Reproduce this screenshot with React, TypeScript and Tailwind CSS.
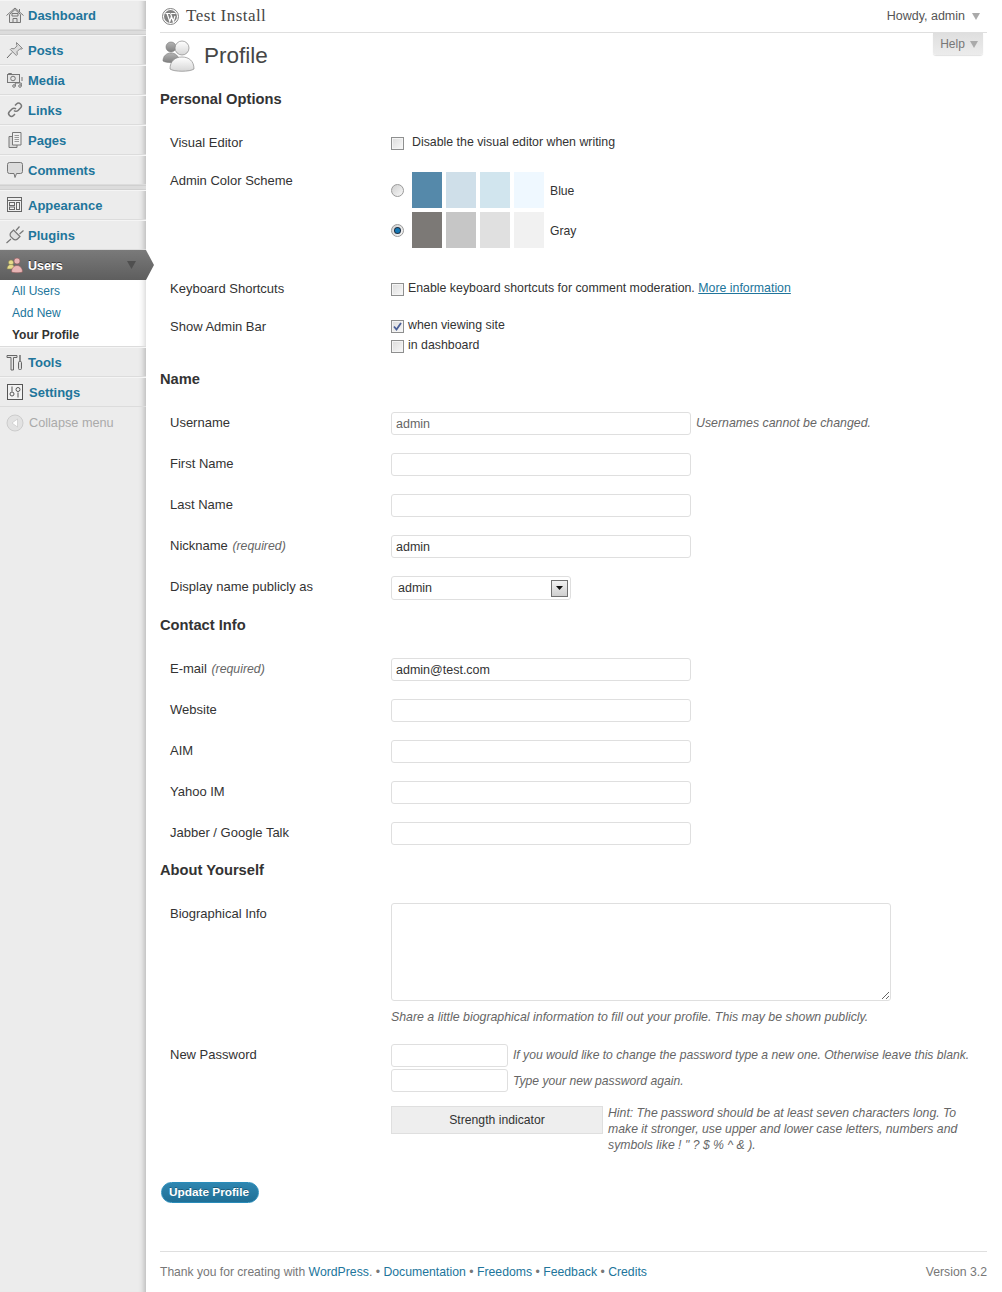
import React from 'react';

const arial = 'font-["Liberation_Sans",Arial,sans-serif]';

const HomeIcon = () => (
  <svg width="18" height="18" viewBox="0 0 18 18" fill="none" stroke="#777" strokeWidth="1">
    <path d="M.5 9.500 9 2l8.500 7.500" />
    <path d="M13.500 3v3" />
    <path d="M3.500 8.500v8h11v-8L9 3.500z" fill="#e4e4e4" />
    <path d="M7 16.500v-4h4v4M6 7.500h6v2.500H6z" />
  </svg>
);
const PinIcon = () => (
  <svg width="18" height="18" viewBox="0 0 18 18" fill="none" stroke="#888" strokeWidth="1">
    <path d="M10.500 1.500l6 6-1.500.7-1-.5-3 3 .3 2.800-1 1-6-6 1-1 2.800.3 3-3-.6-1z" fill="#dcdcdc" />
    <path d="M6 11.500l-5 5.500" stroke="#666" />
  </svg>
);
const MediaIcon = () => (
  <svg width="18" height="18" viewBox="0 0 18 18" fill="none" stroke="#777" strokeWidth="1">
    <rect x="1.500" y="3.500" width="12" height="8" fill="#e6e6e6" />
    <circle cx="7" cy="7.500" r="2.300" />
    <path d="M2.500 3.500v-1h3v1M15 7h2M15 9h2" />
    <circle cx="8" cy="15" r="1.300" />
    <circle cx="14" cy="15" r="1.300" />
    <path d="M9.300 15v-3h6v3" />
  </svg>
);
const LinkIcon = () => (
  <svg width="18" height="18" viewBox="0 0 18 18" fill="none" stroke="#777" strokeWidth="1.500">
    <path d="M9 4.500l1.500-1.500a2.800 2.800 0 0 1 4 4L12 9.500a2.800 2.800 0 0 1-4 0" />
    <path d="M9 13l-1.500 1.500a2.800 2.800 0 0 1-4-4L6 8a2.800 2.800 0 0 1 4 0" />
  </svg>
);
const PagesIcon = () => (
  <svg width="18" height="18" viewBox="0 0 18 18" fill="none" stroke="#777" strokeWidth="1">
    <path d="M3 5.500h8v11H3z" fill="#d8d8d8" />
    <path d="M6.500 1.500h8.500v12.500H6.500z" fill="#efefef" />
    <path d="M8.500 4.500h4.500M8.500 6.500h4.500M8.500 8.500h4.500M8.500 10.500h4.500" stroke="#999" />
  </svg>
);
const CommentIcon = () => (
  <svg width="18" height="18" viewBox="0 0 18 18" fill="none" stroke="#777" strokeWidth="1">
    <path d="M3.500 1.500h11a2 2 0 0 1 2 2v7a2 2 0 0 1-2 2h-4L9 16.500l-1-4H3.500a2 2 0 0 1-2-2v-7a2 2 0 0 1 2-2z" fill="#dcdcdc" />
  </svg>
);
const AppearanceIcon = () => (
  <svg width="18" height="18" viewBox="0 0 18 18" fill="none" stroke="#666" strokeWidth="1">
    <rect x="1.500" y="1.500" width="14" height="14" fill="#eee" />
    <path d="M1.500 4.500h14" />
    <rect x="3.500" y="6.500" width="5" height="3" />
    <rect x="3.500" y="11" width="5" height="2.500" />
    <rect x="10.500" y="6.500" width="3" height="7" />
  </svg>
);
const PluginIcon = () => (
  <svg width="18" height="18" viewBox="0 0 18 18" fill="none" stroke="#777" strokeWidth="1.200">
    <path d="M7.500 4l6.500 6.500-2.500 2.500a3 3 0 0 1-4.300 0L5 10.800a3 3 0 0 1 0-4.300z" fill="#e0e0e0" />
    <path d="M10 4.500l3.500-4M13.500 8l4-3.500M5 13l-4.500 4" />
  </svg>
);
const UsersIcon = () => (
  <svg width="18" height="18" viewBox="0 0 18 18">
    <circle cx="5" cy="6.500" r="2.500" fill="#e6dc8c" stroke="#8a8450" strokeWidth=".6" />
    <path d="M1 13c0-3 2-4.500 4-4.500S9 10 9 13z" fill="#e6dc8c" stroke="#8a8450" strokeWidth=".6" />
    <circle cx="11" cy="5" r="3" fill="#e8b4b4" stroke="#8e5a5a" strokeWidth=".6" />
    <path d="M5.500 16c0-4 2.500-6.500 5.500-6.500s5.500 2.500 5.500 6.500c-2 1-9 1-11 0z" fill="#e8b4b4" stroke="#8e5a5a" strokeWidth=".6" />
  </svg>
);
const ToolsIcon = () => (
  <svg width="18" height="18" viewBox="0 0 18 18" fill="none" stroke="#666" strokeWidth="1">
    <path d="M1 2.500h10v2H7.500V17h-2.500V4.500H1z" fill="#e4e4e4" />
    <rect x="12.500" y="8.500" width="3" height="8" rx="1" fill="#ddd" />
    <path d="M14 8.500V2" strokeWidth="1.400" />
  </svg>
);
const SettingsIcon = () => (
  <svg className="mr-[1px]" width="18" height="18" viewBox="0 0 18 18" fill="none" stroke="#555" strokeWidth="1">
    <rect x="1.500" y="1.500" width="15" height="15" fill="#f2f2f2" />
    <path d="M6 3.500v5M12 9.500v5" />
    <circle cx="6" cy="11" r="2" />
    <circle cx="12" cy="6.500" r="2" />
  </svg>
);

const MenuItem = ({ icon, label, h = 30 }: { icon: React.ReactNode; label: string; h?: number }) => (
  <div
    style={{ height: h }}
    className="flex items-center gap-[3px] border-t border-t-[#f5f5f5] border-b border-b-[#dcdcdc] pl-[6px] text-[13px] font-bold text-[#21759b] leading-none"
  >
    {icon}
    <span className="pl-[1px]">{label}</span>
  </div>
);

const Separator = () => <div className="h-[5px] bg-[#dcdcdc] border-t border-b border-[#d0d0d0]" />;

const Sidebar = () => (
  <aside className="relative w-[146px] shrink-0 bg-[#ececec] shadow-[inset_-7px_0_6px_-6px_rgba(0,0,0,0.28)]">
    <MenuItem icon={<HomeIcon />} label="Dashboard" />
    <Separator />
    <MenuItem icon={<PinIcon />} label="Posts" />
    <MenuItem icon={<MediaIcon />} label="Media" />
    <MenuItem icon={<LinkIcon />} label="Links" />
    <MenuItem icon={<PagesIcon />} label="Pages" />
    <MenuItem icon={<CommentIcon />} label="Comments" />
    <Separator />
    <MenuItem icon={<AppearanceIcon />} label="Appearance" />
    <MenuItem icon={<PluginIcon />} label="Plugins" />
    <div className="relative flex h-[30px] w-[146px] items-center gap-[3px] bg-gradient-to-b from-[#7a7a7a] to-[#5e5e5e] pl-[6px] text-[12.500px] font-bold text-white [text-shadow:0_-1px_0_#333]">
      <UsersIcon />
      <span className="pl-[1px] pt-[3px]">Users</span>
      <svg className="absolute left-[127px] top-[11px]" width="9" height="8" viewBox="0 0 9 8">
        <path d="M0 0h9L4.500 8z" fill="#4f4f4f" />
      </svg>
      <svg className="absolute left-[146px] top-0" width="8" height="30" viewBox="0 0 8 30">
        <defs>
          <linearGradient id="users-tip" x1="0" y1="0" x2="0" y2="1">
            <stop offset="0" stopColor="#7a7a7a" />
            <stop offset="1" stopColor="#5e5e5e" />
          </linearGradient>
        </defs>
        <path d="M0 0l8 15L0 30z" fill="url(#users-tip)" />
      </svg>
    </div>
    <div className="h-[67px] bg-white border-b border-b-[#dcdcdc] pl-[12px] pt-[1px] text-[12px] shadow-[inset_-7px_0_6px_-6px_rgba(0,0,0,0.2)]">
      <div className="h-[22px] leading-[20px] text-[#21759b]">All Users</div>
      <div className="h-[22px] leading-[20px] text-[#21759b]">Add New</div>
      <div className="h-[22px] leading-[20px] font-bold text-[#333]">Your Profile</div>
    </div>
    <MenuItem icon={<ToolsIcon />} label="Tools" />
    <MenuItem icon={<SettingsIcon />} label="Settings" />
    <div className="flex h-[32px] items-center gap-[5px] pl-[6px] text-[12.700px] text-[#aaa]">
      <svg width="18" height="18" viewBox="0 0 18 18">
        <circle cx="9" cy="9" r="8" fill="#e2e2e2" stroke="#ccc" />
        <path d="M11.500 5v8L6 9z" fill="#fff" stroke="#bbb" strokeWidth=".5" />
      </svg>
      <span className="pt-[1px]">Collapse menu</span>
    </div>
  </aside>
);

const Checkbox = ({ checked = false }: { checked?: boolean }) => (
  <span className="relative block h-[13px] w-[13px] shrink-0 border border-[#8e8f8f] bg-gradient-to-br from-[#dcdcdc] to-[#f8f8f8] shadow-[inset_0_0_0_1px_#f4f4f4]">
    {checked && (
      <svg className="absolute left-[1px] top-[1px]" width="9" height="9" viewBox="0 0 9 9">
        <path d="M1 4.500l2.500 3L8 1" fill="none" stroke="#4a5f97" strokeWidth="1.800" />
      </svg>
    )}
  </span>
);

const Radio = ({ checked = false }: { checked?: boolean }) => (
  <span className="flex h-[13px] w-[13px] shrink-0 items-center justify-center rounded-full border border-[#9a9a9a] bg-gradient-to-br from-[#d0d0d0] to-[#f8f8f8]">
    {checked && <span className="block h-[5px] w-[5px] rounded-full bg-[#1679b5] ring-1 ring-[#1d2f44]" />}
  </span>
);

const TextInput = ({ value = '', muted = false, w = 300 }: { value?: string; muted?: boolean; w?: number }) => (
  <input
    readOnly
    value={value}
    style={{ width: w }}
    className={`h-[23px] rounded-[3px] border border-[#dfdfdf] bg-white px-[4px] text-[12.500px] ${arial} ${muted ? 'text-[#666]' : 'text-[#333]'}`}
  />
);

const Heading = ({ children }: { children: React.ReactNode }) => (
  <h3 className="h-[44px] text-[14.700px] font-bold leading-[22px] text-[#333]">{children}</h3>
);

const Row = ({ label, h = 41, low = false, children }: { label: React.ReactNode; h?: number; low?: boolean; children?: React.ReactNode }) => (
  <div style={{ height: h }} className="flex text-[#333]">
    <div className={`w-[231px] shrink-0 pl-[10px] text-[13px] leading-[22px] ${low ? 'pt-[1px]' : ''}`}>{label}</div>
    <div className="min-w-0 flex-1 text-[12.350px]">{children}</div>
  </div>
);

const Required = () => <em className="pl-[1px] text-[12.300px] text-[#666]">(required)</em>;

const Hint = ({ className = '', children }: { className?: string; children: React.ReactNode }) => (
  <span className={`italic text-[#666] ${className}`}>{children}</span>
);

const Swatches = ({ colors, name, checked = false }: { colors: string[]; name: string; checked?: boolean }) => (
  <div className="flex h-[36px] items-center">
    <span className="w-[21px]">
      <Radio checked={checked} />
    </span>
    <div className="flex gap-[4px]">
      {colors.map((c) => (
        <span key={c} style={{ backgroundColor: c }} className="block h-[36px] w-[30px]" />
      ))}
    </div>
    <span className="pl-[6px] pt-[2px] text-[12.200px]">{name}</span>
  </div>
);

const FooterLink = ({ children }: { children: React.ReactNode }) => <span className="text-[#21759b]">{children}</span>;

export default function App() {
  return (
    <div className={`flex min-h-[1292px] bg-white ${arial}`}>
      <Sidebar />
      <main className="relative min-w-0 flex-1 pl-[14px] pr-[15px]">
        <header className="flex h-[33px] items-center justify-between border-b border-[#dfdfdf]">
          <div className="flex items-center pl-[2px]">
            <svg width="17" height="17" viewBox="0 0 17 17" fill="none">
              <circle cx="8.500" cy="8.500" r="8" fill="#fff" stroke="#808080" />
              <circle cx="8.500" cy="8.500" r="6.500" fill="#808080" />
              <path d="M3.500 5.500h4.500M9 5.500h4.500M5 5.500l2.800 8 1.700-5M8.500 5.500l2.800 8 1.700-5.500" stroke="#fff" strokeWidth="1.200" />
            </svg>
            <span className='pl-[7px] font-["Liberation_Serif",Georgia,serif] text-[17px] tracking-[0.45px] text-[#464646]'>Test Install</span>
          </div>
          <div className="flex items-center gap-[7px] pr-[7px] text-[12.500px] text-[#555]">
            <span>Howdy, admin</span>
            <svg width="8" height="8" viewBox="0 0 8 8">
              <path d="M0 1h8L4 8z" fill="#aaa" />
            </svg>
          </div>
        </header>

        <div className="absolute right-[19px] top-[33px] flex h-[22px] w-[50px] items-center justify-center gap-[5px] rounded-b-[3px] bg-gradient-to-b from-[#dfdfdf] to-[#ececec] pl-[2px] text-[12px] text-[#777] shadow-[0_1px_1px_rgba(0,0,0,0.12)]">
          <span>Help</span>
          <svg width="8" height="8" viewBox="0 0 8 8">
            <path d="M0 1h8L4 8z" fill="#aaa" />
          </svg>
        </div>

        <div className="flex h-[46px] items-center pl-[2px]">
          <svg width="34" height="34" viewBox="0 0 34 34">
            <defs>
              <linearGradient id="person-back" x1="0" y1="0" x2="0" y2="1">
                <stop offset="0" stopColor="#b5b5b5" />
                <stop offset="1" stopColor="#808080" />
              </linearGradient>
              <linearGradient id="person-front" x1="0" y1="0" x2="0" y2="1">
                <stop offset="0" stopColor="#fff" />
                <stop offset="1" stopColor="#d6d6d6" />
              </linearGradient>
            </defs>
            <circle cx="9" cy="8" r="5" fill="url(#person-back)" stroke="#777" strokeWidth=".6" />
            <path d="M1 22c0-5 3.500-8 8-8s8 3 8 8c-3 2-13 2-16 0z" fill="url(#person-back)" stroke="#777" strokeWidth=".6" />
            <circle cx="20" cy="9" r="7" fill="url(#person-front)" stroke="#888" strokeWidth=".7" />
            <path d="M8 30c0-8 5-12 12-12s12 4 12 12c-4 3-20 3-24 0z" fill="url(#person-front)" stroke="#888" strokeWidth=".7" />
          </svg>
          <h2 className="pl-[8px] pt-[1px] text-[22.500px] leading-none text-[#464646]">Profile</h2>
        </div>

        <h3 className="h-[52px] pt-[9px] text-[14.700px] font-bold leading-[22px] text-[#333]">Personal Options</h3>

        <Row label="Visual Editor" h={38} low>
          <div className="flex items-start pt-[6px]">
            <Checkbox />
            <span className="relative top-[-4px] pl-[8px]">Disable the visual editor when writing</span>
          </div>
        </Row>

        <Row label="Admin Color Scheme" h={108} low>
          <div className="flex flex-col gap-[4px] pt-[3px]">
            <Swatches name="Blue" colors={['#5589aa', '#cfdfe9', '#d1e5ee', '#eff8ff']} />
            <Swatches name="Gray" checked colors={['#7c7976', '#c6c6c6', '#e0e0e0', '#f1f1f1']} />
          </div>
        </Row>

        <Row label="Keyboard Shortcuts" h={38} low>
          <div className="flex items-start pt-[6px]">
            <Checkbox />
            <span className="relative top-[-4px] pl-[4px]">
              Enable keyboard shortcuts for comment moderation. <span className="text-[#21759b] underline">More information</span>
            </span>
          </div>
        </Row>

        <Row label="Show Admin Bar" h={53} low>
          <div className="flex flex-col gap-[7px] pt-[5px]">
            <div className="flex h-[13px] items-center">
              <Checkbox checked />
              <span className="relative top-[-1px] pl-[4px]">when viewing site</span>
            </div>
            <div className="flex h-[13px] items-center">
              <Checkbox />
              <span className="relative top-[-1px] pl-[4px]">in dashboard</span>
            </div>
          </div>
        </Row>

        <Heading>Name</Heading>
        <Row label="Username">
          <div className="flex items-center gap-[5px]">
            <TextInput value="admin" muted />
            <Hint className="text-[12.350px]">Usernames cannot be changed.</Hint>
          </div>
        </Row>
        <Row label="First Name">
          <TextInput />
        </Row>
        <Row label="Last Name">
          <TextInput />
        </Row>
        <Row label={<>Nickname <Required /></>}>
          <TextInput value="admin" />
        </Row>
        <Row label="Display name publicly as" h={38}>
          <div className="flex h-[24px] w-[180px] items-center justify-between rounded-[3px] border border-[#dfdfdf] bg-white pl-[6px] pr-[2px] text-[12.500px]">
            <span>admin</span>
            <span className="flex h-[17px] w-[17px] items-center justify-center border border-[#707070] bg-gradient-to-b from-[#f2f2f2] to-[#cfcfcf]">
              <svg width="7" height="4" viewBox="0 0 7 4">
                <path d="M0 0h7L3.500 4z" fill="#111" />
              </svg>
            </span>
          </div>
        </Row>

        <Heading>Contact Info</Heading>
        <Row label={<>E-mail <Required /></>}>
          <TextInput value="admin@test.com" />
        </Row>
        <Row label="Website">
          <TextInput />
        </Row>
        <Row label="AIM">
          <TextInput />
        </Row>
        <Row label="Yahoo IM">
          <TextInput />
        </Row>
        <Row label="Jabber / Google Talk" h={37}>
          <TextInput />
        </Row>

        <Heading>About Yourself</Heading>
        <Row label="Biographical Info" h={141}>
          <textarea readOnly className="block h-[98px] w-[500px] rounded-[3px] border border-[#dfdfdf] bg-white" />
          <Hint className="block pt-[9px] text-[12.350px] leading-[15px]">Share a little biographical information to fill out your profile. This may be shown publicly.</Hint>
        </Row>

        <Row label="New Password" h={102}>
          <div className="flex items-center gap-[5px]">
            <TextInput w={117} />
            <Hint className="whitespace-nowrap text-[12.150px]">If you would like to change the password type a new one. Otherwise leave this blank.</Hint>
          </div>
          <div className="mt-[2px] flex items-center gap-[5px]">
            <TextInput w={117} />
            <Hint className="pt-[2px] text-[12.150px]">Type your new password again.</Hint>
          </div>
          <div className="mt-[14px] flex items-start gap-[5px]">
            <div className="flex h-[28px] w-[212px] shrink-0 items-center justify-center border border-[#dfdfdf] bg-[#eee] text-[12.200px] text-[#333]">Strength indicator</div>
            <Hint className="relative top-[-1px] text-[12.250px] leading-[16px]">Hint: The password should be at least seven characters long. To make it stronger, use upper and lower case letters, numbers and symbols like ! " ? $ % ^ &amp; ).</Hint>
          </div>
        </Row>

        <div className="mt-[36px] pl-px">
          <button className="flex h-[21px] w-[98px] items-center justify-center rounded-full border border-[#298cba] bg-gradient-to-b from-[#2f86b0] to-[#1f6f96] pr-[2px] pt-[1px] text-[11.800px] font-bold text-white [text-shadow:0_-1px_0_rgba(0,0,0,0.3)]">
            Update Profile
          </button>
        </div>

        <footer className="mt-[48px] flex h-[41px] items-center justify-between border-t border-[#dfdfdf] text-[12.250px] text-[#777]">
          <span>
            <span className="text-[12.100px]">Thank you for creating with </span>
            <FooterLink>WordPress</FooterLink>. • <FooterLink>Documentation</FooterLink> • <FooterLink>Freedoms</FooterLink> • <FooterLink>Feedback</FooterLink> • <FooterLink>Credits</FooterLink>
          </span>
          <span>Version 3.2</span>
        </footer>
      </main>
    </div>
  );
}
